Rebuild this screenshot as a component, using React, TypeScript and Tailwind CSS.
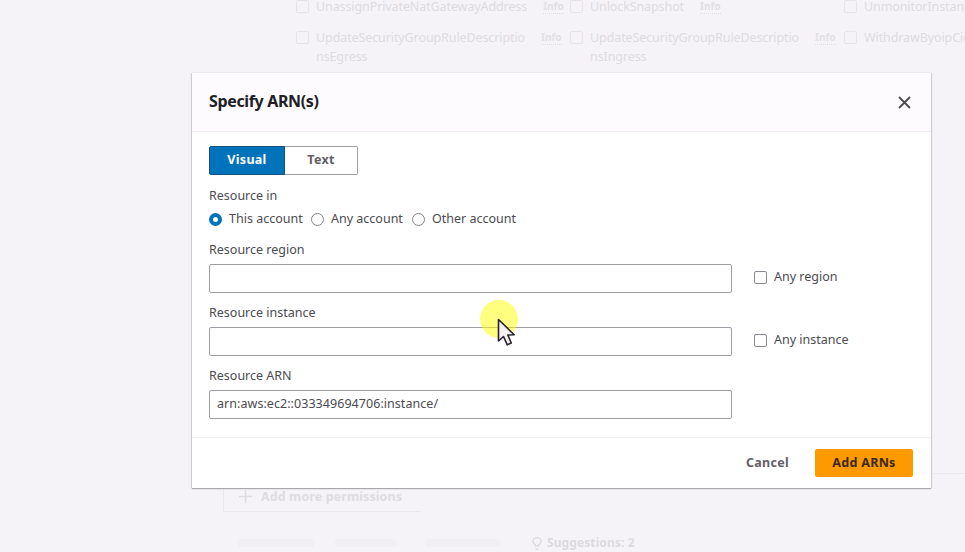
import React from "react";

type Action = { lines: string[]; info?: boolean };

const actionRows: Action[][] = [
  [
    { lines: ["UnassignPrivateNatGatewayAddress"], info: true },
    { lines: ["UnlockSnapshot"], info: true },
    { lines: ["UnmonitorInstances"] },
  ],
  [
    { lines: ["UpdateSecurityGroupRuleDescriptio", "nsEgress"], info: true },
    { lines: ["UpdateSecurityGroupRuleDescriptio", "nsIngress"], info: true },
    { lines: ["WithdrawByoipCidr"] },
  ],
];

function ActionItem({ action }: { action: Action }) {
  return (
    <div className="flex w-[274px] shrink-0 items-start">
      <span className="mt-[3px] h-[13px] w-[13px] shrink-0 rounded-[2px] border border-[#e6e4e9]" />
      <span className="ml-[7px] whitespace-nowrap text-[12.5px] leading-[19px] tracking-[-0.1px] text-[#dddce1]">
        {action.lines.map((line) => (
          <span key={line} className="block">
            {line}
          </span>
        ))}
      </span>
      {action.info && (
        <span className="ml-4 mt-[3px] border-b border-dotted border-[#dddce1] text-[10px] font-bold leading-[13px] text-[#e1e0e5]">
          Info
        </span>
      )}
    </div>
  );
}

function PolicyPage() {
  return (
    <div className="flex h-full w-full flex-col overflow-hidden">
      <div className="-mt-[3px] flex h-[473px] shrink-0 flex-col gap-3 pl-[296px]">
        {actionRows.map((row, i) => (
          <div key={i} className="flex">
            {row.map((action) => (
              <ActionItem key={action.lines.join("")} action={action} />
            ))}
          </div>
        ))}
      </div>
      <div className="ml-[223px] h-px shrink-0 bg-[#ebeaee] mt-[3px]" />
      <div className="ml-[223px] flex h-[38px] w-[197px] shrink-0 items-center border-b border-l border-[#e9e7ec] pl-[14px] pt-[8px] text-[#dddce1]">
        <svg width="15" height="15" viewBox="0 0 15 15" stroke="currentColor" strokeWidth="1.5" fill="none">
          <path d="M7.5 1v13M1 7.5h13" />
        </svg>
        <span className="ml-[8px] whitespace-nowrap text-[12.5px] font-bold leading-[18px] tracking-[0.1px]">
          Add more permissions
        </span>
      </div>
      <div className="ml-[237px] mt-[22px] flex h-[18px] shrink-0 items-center text-[#dcdbe0]">
        <span className="h-2 w-[78px] rounded-full bg-[#f1eff3]" />
        <span className="ml-5 h-2 w-[62px] rounded-full bg-[#f1eff3]" />
        <span className="ml-7 h-2 w-[75px] rounded-full bg-[#f1eff3]" />
        <svg className="ml-[32px]" width="10" height="13" viewBox="0 0 10 13" fill="none" stroke="currentColor" strokeWidth="1.5">
          <path d="M3.5 9V8C2 7 1 6 1 4.5a4 4 0 0 1 8 0C9 6 8 7 6.500 8v1zM3.500 12h3" />
        </svg>
        <span className="ml-[5px] text-[12px] font-bold tracking-[0.1px]">Suggestions: 2</span>
      </div>
    </div>
  );
}

function Radio({ label, checked, width }: { label: string; checked?: boolean; width: string }) {
  return (
    <label className={`flex items-center ${width}`}>
      <span
        className={
          checked
            ? "h-[13px] w-[13px] shrink-0 rounded-full border-4 border-[#0073bb] bg-white"
            : "h-[13px] w-[13px] shrink-0 rounded-full border border-[#85838a] bg-white"
        }
      />
      <span className="ml-[7px] whitespace-nowrap">{label}</span>
    </label>
  );
}

function Field({ label, value = "", option }: { label: string; value?: string; option?: string }) {
  return (
    <div>
      <div className="h-[18px] leading-[18px]">{label}</div>
      <div className="mt-[5px] flex items-center">
        <div className="flex h-[29px] w-[523px] items-center rounded-[2px] border border-[#a09ea5] bg-white pl-[7px] pb-px text-[12.5px] tracking-[0.05px]">
          {value}
        </div>
        {option && (
          <label className="-mt-[3px] ml-[22px] flex items-center">
            <span className="h-[13px] w-[13px] rounded-[2px] border border-[#8b8990] bg-white" />
            <span className="ml-[7px]">{option}</span>
          </label>
        )}
      </div>
    </div>
  );
}

function ArnDialog() {
  return (
    <div className="flex h-[415px] w-[739px] flex-col bg-white text-[12.5px] text-[#4c4b50] shadow-[0_1px_1px_0_#a9a7ae,1px_0_1px_0_#d5d3d9,-1px_0_1px_0_#d5d3d9]">
      <header className="flex h-[59px] shrink-0 items-center justify-between border-b border-[#f0eff2] bg-[#fdfbfe] pl-[17px] pr-5">
        <h1 className="-mt-[2px] text-[16px] font-bold leading-6 tracking-[-0.35px] text-[#202024]">Specify ARN(s)</h1>
        <svg width="13" height="13" viewBox="0 0 13 13" fill="none" stroke="#4b4b4e" strokeWidth="1.8">
          <path d="M1 1l11 11M12 1L1 12" />
        </svg>
      </header>
      <main className="flex h-[305px] shrink-0 flex-col pl-[17px] pt-[14px]">
        <div className="flex h-[29px] w-[149px] text-center text-[12.5px] font-bold leading-[26px] tracking-[0.3px]">
          <div className="w-[76px] rounded-l-[2px] border border-[#17517b] bg-[#0073bb] text-white">Visual</div>
          <div className="flex-1 rounded-r-[2px] border border-l-0 border-[#a09ea5] text-[#626066]">Text</div>
        </div>
        <div className="mt-[12px] h-[18px] leading-[18px]">Resource in</div>
        <div className="mt-[5px] flex h-[18px] items-center">
          <Radio label="This account" checked width="w-[102px]" />
          <Radio label="Any account" width="w-[101px]" />
          <Radio label="Other account" width="w-[110px]" />
        </div>
        <div className="mt-[13px] flex flex-col gap-[11px]">
          <Field label="Resource region" option="Any region" />
          <Field label="Resource instance" option="Any instance" />
          <Field label="Resource ARN" value="arn:aws:ec2::033349694706:instance/" />
        </div>
      </main>
      <footer className="flex flex-1 items-center justify-end border-t border-[#f0eff2] pr-[18px] text-[12.5px] font-bold tracking-[0.3px]">
        <span className="mr-[26px] text-[#626066]">Cancel</span>
        <span className="h-[28px] w-[98px] rounded-[2px] bg-[#ff9900] text-center leading-[27px] text-[#38291b]">
          Add ARNs
        </span>
      </footer>
    </div>
  );
}

function Pointer() {
  return (
    <div className="absolute left-[480px] top-[300px] h-[50px] w-[40px]">
      <div className="h-[38px] w-[38px] rounded-full bg-[#ffff00]/50" />
      <svg className="absolute left-[17px] top-[18px]" width="20" height="30" viewBox="0 0 20 30">
        <path
          d="M1.500 1.500V23L6.500 18.500L10.300 26.800L14.300 25L10.800 17L17.200 16.800Z"
          fill="#f4f1f6"
          stroke="#29232d"
          strokeWidth="1.6"
          strokeLinejoin="round"
        />
      </svg>
    </div>
  );
}

export default function App() {
  return (
    <div className="relative h-[552px] w-[965px] overflow-hidden bg-[#f5f3f7] font-['Noto_Sans','Open_Sans',sans-serif]">
      <PolicyPage />
      <div className="absolute left-[192px] top-[73px]">
        <ArnDialog />
      </div>
      <Pointer />
    </div>
  );
}
